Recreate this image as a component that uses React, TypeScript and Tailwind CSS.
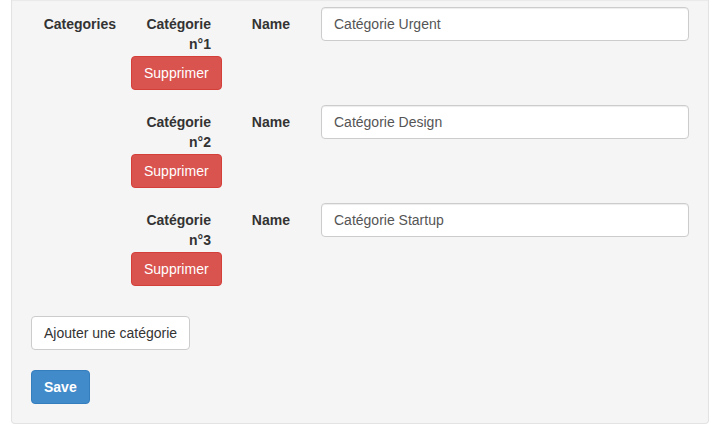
const categories = ["Catégorie Urgent", "Catégorie Design", "Catégorie Startup"];

export default function App() {
  return (
    <div
      className="min-h-screen bg-white text-[14px] leading-5 text-[#333]"
      style={{ fontFamily: '"Liberation Sans", Arial, Helvetica, sans-serif' }}
    >
      <div className="ml-[11px] mr-[5px] rounded-b-[4px] border border-t-0 border-[#e3e3e3] bg-[#f5f5f5] px-[19px] pb-[19px] pt-[7px] shadow-[inset_0_1px_1px_rgba(0,0,0,0.05)]">
        {/* Categories fieldset */}
        <div className="flex">
          <div className="w-[100px] shrink-0 pr-[15px] pt-[7px] text-right font-bold">
            Categories
          </div>
          <div className="flex flex-1 flex-col gap-[15px]">
            {categories.map((name, i) => (
              <div key={name} className="flex">
                <div className="w-[95px] shrink-0">
                  <div className="pr-[15px] pt-[7px] text-right font-bold">
                    Catégorie n°{i + 1}
                  </div>
                  <button className="mt-[2px] h-[34px] rounded-[4px] border border-[#d43f3a] bg-[#d9534f] px-3 text-white">
                    Supprimer
                  </button>
                </div>
                <div className="w-[79px] shrink-0 pr-[15px] pt-[7px] text-right font-bold">
                  Name
                </div>
                <div className="ml-[16px] flex-1">
                  <input
                    readOnly
                    value={name}
                    className="h-[34px] w-full rounded-[4px] border border-[#ccc] bg-white px-3 text-[#555] shadow-[inset_0_1px_1px_rgba(0,0,0,0.075)] outline-none"
                  />
                </div>
              </div>
            ))}
          </div>
        </div>

        <div className="mt-[30px]">
          <button className="h-[34px] rounded-[4px] border border-[#ccc] bg-white px-3 text-[#333]">
            Ajouter une catégorie
          </button>
        </div>

        <div className="mt-[20px]">
          <button className="h-[34px] rounded-[4px] border border-[#357ebd] bg-[#428bca] px-3 font-bold text-white">
            Save
          </button>
        </div>
      </div>
    </div>
  );
}
